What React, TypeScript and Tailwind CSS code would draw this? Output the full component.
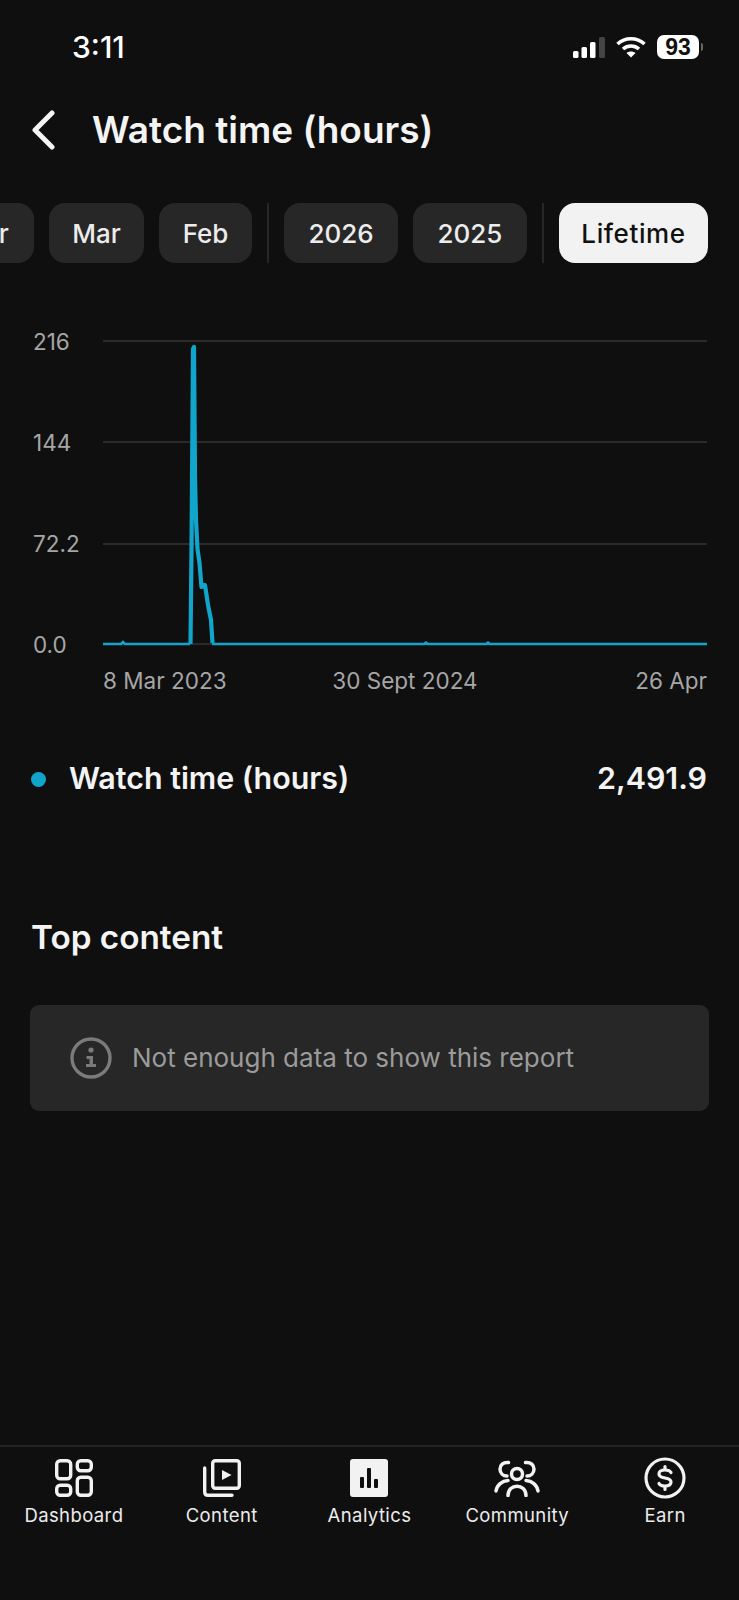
const inter = "font-['Inter',sans-serif]";

function SignalIcon() {
	return (
		<svg width="32" height="21" viewBox="0 0 32 21">
			<rect x="0" y="14" width="5.5" height="7" rx="1.5" fill="#fff" />
			<rect x="8.5" y="10" width="5.5" height="11" rx="1.5" fill="#fff" />
			<rect x="17" y="5" width="5.5" height="16" rx="1.5" fill="#fff" />
			<rect x="26" y="0" width="6" height="21" rx="1.5" fill="#444444" />
		</svg>
	);
}

function WifiIcon() {
	return (
		<svg width="30" height="22" viewBox="1 0 30 22" fill="none" stroke="#fff" strokeWidth="3.6">
			<path d="M2.5 8 C10 1, 22 1, 29.5 8" />
			<path d="M8 13 C12.5 9, 19.5 9, 24 13" />
			<path d="M16 21.5 L11.5 17 C14 15, 18 15, 20.5 17 Z" fill="#fff" stroke="none" />
		</svg>
	);
}

function Battery() {
	return (
		<div className="flex items-center gap-[2px]">
			<div className="w-[42px] h-[24px] rounded-[7px] bg-white flex items-center justify-center text-[#111111] text-[23px] leading-none font-bold font-['Liberation_Sans',sans-serif]">
				93
			</div>
			<div className="w-[2px] h-[8px] rounded-r-full bg-[#666666]" />
		</div>
	);
}

function ChevronBack() {
	return (
		<svg width="26" height="40" viewBox="0 0 26 40" fill="none" stroke="#f4f4f4" strokeWidth="5" strokeLinecap="round" strokeLinejoin="round">
			<path d="M22 3 L5 20 L22 37" />
		</svg>
	);
}

function Chip({ label, width, active }: { label: string; width: string; active?: boolean }) {
	const tone = active ? "bg-[#f2f2f2] text-[#111111] tracking-[0.6px]" : "bg-[#272727] text-[#ececec]";
	return (
		<div className={`${width} ${tone} shrink-0 h-[60px] rounded-[16px] flex items-center justify-center text-[26px] font-medium`}>
			{label}
		</div>
	);
}

function Chart() {
	return (
		<svg width="604" height="331" viewBox="0 0 604 331" fill="none" className="shrink-0">
			<path d="M0 14 H604 M0 115 H604 M0 217 H604 M0 317 H604" stroke="#2a2a2a" strokeWidth="2" />
			<path
				d="M0 317 H18 L20 315 L22 317 H87 M109 317 H321 L323 315.5 L325 317 H383 L385 315.5 L387 317 H604"
				stroke="#11a5cc"
				strokeWidth="2.6"
			/>
			<path
				d="M87.5 317 L88.5 223 L90 22 L91 20 L92 150 L93 193 L94.5 222 L96.5 236 L98.5 260 L100.5 258 L102 258 L105 278 L108 293 L109.5 316"
				stroke="#11a5cc"
				strokeWidth="4.2"
				strokeLinejoin="round"
			/>
		</svg>
	);
}

function DashboardIcon() {
	return (
		<svg width="38" height="38" viewBox="0 0 38 38" fill="none" stroke="#f2f2f2" strokeWidth="3.4">
			<rect x="1.7" y="1.7" width="14" height="18" rx="3.5" />
			<rect x="22.3" y="1.7" width="14" height="10" rx="3.5" />
			<rect x="1.7" y="26.3" width="14" height="10" rx="3.5" />
			<rect x="22.3" y="18.3" width="14" height="18" rx="3.5" />
		</svg>
	);
}

function ContentIcon() {
	return (
		<svg width="38" height="38" viewBox="0 0 38 38" fill="none" stroke="#f2f2f2" strokeWidth="3.4">
			<rect x="9.7" y="1.7" width="26.6" height="27.6" rx="2.5" />
			<path d="M1.7 9 V33 C1.7 35.2 2.8 36.3 5 36.3 H29" strokeLinecap="round" />
			<path d="M19 11 L28.5 16 L19 21 Z" fill="#f2f2f2" stroke="none" />
		</svg>
	);
}

function AnalyticsIcon() {
	return (
		<svg width="38" height="38" viewBox="0 0 38 38">
			<rect width="38" height="38" rx="3" fill="#f2f2f2" />
			<rect x="10" y="18" width="4" height="11" rx="1" fill="#0f0f0f" />
			<rect x="17" y="9" width="4" height="20" rx="1" fill="#0f0f0f" />
			<rect x="24" y="20" width="4" height="9" rx="1" fill="#0f0f0f" />
		</svg>
	);
}

function CommunityIcon() {
	return (
		<svg width="48" height="38" viewBox="0 0 48 38" fill="none" stroke="#f2f2f2" strokeWidth="3.5" strokeLinecap="round">
			<circle cx="24" cy="15" r="5.5" />
			<path d="M15 36.5 C15 24, 33 24, 33 36.5" />
			<path d="M15.5 3.5 C10 3, 7 6, 7 10 C7 14, 10 17, 14 17" />
			<path d="M32.5 3.5 C38 3, 41 6, 41 10 C41 14, 38 17, 34 17" />
			<path d="M3 32 C4 26, 9 22, 15 21.5" />
			<path d="M45 32 C44 26, 39 22, 33 21.5" />
		</svg>
	);
}

function EarnIcon() {
	return (
		<svg width="42" height="42" viewBox="0 0 42 42" fill="none" stroke="#f2f2f2" strokeWidth="3.2" strokeLinecap="round">
			<circle cx="21" cy="21" r="19" />
			<path d="M27 15.5 C26 13.5 24 13 21 13 C17.5 13 15 14.5 15 17 C15 19.8 18 20.5 21 21 C24 21.5 27 22.3 27 25 C27 27.5 24.5 29 21 29 C18 29 16 28.5 15 26.5" />
			<path d="M21 9.5 V12 M21 30 V32.5" />
		</svg>
	);
}

function InfoIcon() {
	return (
		<svg width="42" height="42" viewBox="0 0 42 42" fill="none" className="shrink-0">
			<circle cx="21" cy="21" r="19" stroke="#7b7b7b" strokeWidth="3.4" />
			<circle cx="21" cy="13" r="2.6" fill="#7b7b7b" />
			<path d="M16.5 19 H23 V27 H26 V30 H16 V27 H19.5 V22 H16.5 Z" fill="#7b7b7b" />
		</svg>
	);
}

const navItems = [
	{ label: "Dashboard", icon: <DashboardIcon /> },
	{ label: "Content", icon: <ContentIcon /> },
	{ label: "Analytics", icon: <AnalyticsIcon /> },
	{ label: "Community", icon: <CommunityIcon /> },
	{ label: "Earn", icon: <EarnIcon /> },
];

export default function App() {
	return (
		<div className={`${inter} w-[739px] h-[1600px] bg-[#0f0f0f] text-white flex flex-col overflow-hidden`}>
			<div className="h-[94px] shrink-0 flex items-center justify-between pl-[72px] pr-[36px]">
				<span className="text-[30px] font-medium text-white">3:11</span>
				<div className="flex items-center gap-[11px]">
					<SignalIcon />
					<WifiIcon />
					<Battery />
				</div>
			</div>

			<div className="h-[72px] shrink-0 flex items-center pl-[30px] gap-[36px]">
				<ChevronBack />
				<h1 className="text-[37px] font-semibold text-[#f4f4f4]">Watch time (hours)</h1>
			</div>

			<div className="mt-[37px] flex items-center justify-end gap-[15px] pr-[31px] overflow-hidden">
				<Chip label="Apr" width="w-[95px]" />
				<Chip label="Mar" width="w-[95px]" />
				<Chip label="Feb" width="w-[93px]" />
				<div className="w-[2px] h-[60px] bg-[#272727] shrink-0" />
				<Chip label="2026" width="w-[114px]" />
				<Chip label="2025" width="w-[114px]" />
				<div className="w-[2px] h-[60px] bg-[#272727] shrink-0" />
				<Chip label="Lifetime" width="w-[149px]" active />
			</div>

			<div className="mt-[64px] flex pl-[33px]">
				<div className="w-[70px] pt-px flex flex-col gap-[73px] text-[22.5px] leading-[28px] text-[#a6a6a6]">
					<span>216</span>
					<span>144</span>
					<span>72.2</span>
					<span>0.0</span>
				</div>
				<Chart />
			</div>
			<div className="mt-[8px] pl-[103px] pr-[32px] grid grid-cols-3 text-[22.5px] leading-[28px] text-[#a6a6a6] whitespace-nowrap">
				<span>8 Mar 2023</span>
				<span className="text-center">30 Sept 2024</span>
				<span className="text-right">26 Apr</span>
			</div>

			<div className="mt-[64px] h-[40px] flex items-center pl-[31px] pr-[32px]">
				<div className="w-[15px] h-[15px] rounded-full bg-[#11a5cc]" />
				<span className="ml-[23px] text-[30.4px] font-semibold text-[#f4f4f4]">Watch time (hours)</span>
				<span className="ml-auto text-[30.4px] font-semibold text-[#f4f4f4]">2,491.9</span>
			</div>

			<h2 className="mt-[119px] h-[40px] pl-[31px] flex items-center text-[33.3px] font-semibold text-[#f4f4f4]">Top content</h2>

			<div className="mt-[47px] mx-[30px] h-[106px] rounded-[9px] bg-[#272727] flex items-center pl-[40px] gap-[20px]">
				<InfoIcon />
				<span className="text-[26px] leading-[32px] text-[#9b9b9b]">Not enough data to show this report</span>
			</div>

			<nav className="mt-auto h-[155px] shrink-0 border-t-2 border-[#232323] grid grid-cols-5 pt-[10px]">
				{navItems.map((item) => (
					<div key={item.label} className="flex flex-col items-center">
						<div className="h-[42px] flex items-center justify-center">{item.icon}</div>
						<span className="mt-[4px] text-[18.5px] leading-[24px] tracking-[0.4px] text-[#ececec]">{item.label}</span>
					</div>
				))}
			</nav>
		</div>
	);
}
